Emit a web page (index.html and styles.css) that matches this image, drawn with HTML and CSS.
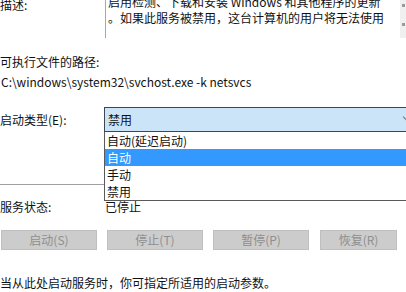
FILE: index.html
```html
<!DOCTYPE html>
<html lang="zh-CN">
<head>
<meta charset="utf-8">
<link rel="stylesheet" href="styles.css">
</head>
<body>
<div class="page">
  <div class="row desc-row">
    <div class="label desc-label">描述:</div>
    <div class="desc-box">
      <div class="desc-text">启用检测、下载和安装 Windows 和其他程序的更新<br>。如果此服务被禁用，这台计算机的用户将无法使用</div>
      <div class="scroll"><span class="arr"></span><span class="arr"></span></div>
    </div>
  </div>
  <div class="path-label">可执行文件的路径:</div>
  <div class="path">C:\windows\system32\svchost.exe -k netsvcs</div>
  <div class="row type-row">
    <div class="label">启动类型(E):</div>
    <div class="combo-wrap">
      <div class="combo"><span>禁用</span><span class="chev"></span></div>
      <ul class="list">
        <li class="item">自动(延迟启动)</li>
        <li class="item sel">自动</li>
        <li class="item">手动</li>
        <li class="item">禁用</li>
      </ul>
    </div>
  </div>
  <div class="sep"></div>
  <div class="row status-row">
    <div class="label">服务状态:</div>
    <div class="value">已停止</div>
  </div>
  <div class="buttons">
    <div class="btn">启动(S)</div>
    <div class="btn">停止(T)</div>
    <div class="btn">暂停(P)</div>
    <div class="btn last">恢复(R)</div>
  </div>
  <div class="footer">当从此处启动服务时，你可指定所适用的启动参数。</div>
</div>
</body>
</html>
```

FILE: styles.css
```css
html, body {
  margin: 0;
  padding: 0;
  background: #ffffff;
  overflow: hidden;
}
body {
  width: 406px;
  height: 292px;
  font-family: "Noto Sans CJK SC", "Noto Sans", sans-serif;
  font-size: 12px;
  color: #111111;
}
.page {
  margin-top: -6px;
  width: 406px;
}
.row {
  display: flex;
}
.label {
  width: 104px;
  flex: none;
  line-height: 16px;
  white-space: nowrap;
}
.desc-label {
  padding-top: 3px;
}
.desc-box {
  flex: 1;
  height: 44px;
  border-left: 1px solid #a8a8a8;
  display: flex;
  margin-left: 1px;
}
.desc-text {
  flex: 1;
  line-height: 16px;
  padding-left: 2px;
  white-space: nowrap;
  overflow: hidden;
}
.scroll {
  width: 6px;
  background: #f0f0f0;
  display: flex;
  flex-direction: column;
  justify-content: space-between;
  padding: 10px 0 12px;
  box-sizing: border-box;
  align-items: center;
}
.arr {
  width: 3px;
  height: 3px;
  background: #9a9a9a;
}
.path-label {
  margin-top: 16px;
  line-height: 16px;
}
.path {
  margin-top: 4px;
  line-height: 16px;
  padding-left: 1px;
}
.type-row {
  margin-top: 17px;
  align-items: center;
}
.combo-wrap {
  position: relative;
  flex: 1;
}
.combo {
  height: 25px;
  box-sizing: border-box;
  border: 1px solid #3b4756;
  border-right: none;
  background: #cce4f7;
  display: flex;
  align-items: center;
  justify-content: space-between;
  padding-left: 3px;
}
.chev {
  width: 5px;
  height: 5px;
  border-left: 1px solid #777;
  border-bottom: 1px solid #777;
  transform: rotate(-45deg);
  margin-right: -4px;
  margin-top: -5px;
}
.list {
  position: absolute;
  left: 0;
  top: 25px;
  right: 0;
  margin: 0;
  padding: 0;
  list-style: none;
  background: #ffffff;
  border-left: 1px solid #5a5a5a;
  border-bottom: 1px solid #5a5a5a;
  z-index: 2;
}
.item {
  height: 17px;
  line-height: 17px;
  padding-left: 2px;
}
.item.sel {
  background: #3399ff;
  color: #ffffff;
}
.sep {
  margin-top: 52px;
  width: 104px;
  height: 1px;
  background: #a0a0a0;
}
.status-row {
  margin-top: 14px;
}
.value {
  line-height: 16px;
  padding-left: 1px;
}
.buttons {
  margin-top: 15px;
  display: flex;
  gap: 10px;
  padding-left: 1px;
}
.btn {
  width: 96px;
  height: 20px;
  flex: none;
  box-sizing: border-box;
  background: #cccccc;
  border: 1px solid #bfbfbf;
  color: #8f8f8f;
  text-align: center;
  line-height: 18px;
}
.btn.last {
  width: 77px;
  margin-left: 1px;
}
.footer {
  margin-top: 25px;
  line-height: 16px;
}
```
